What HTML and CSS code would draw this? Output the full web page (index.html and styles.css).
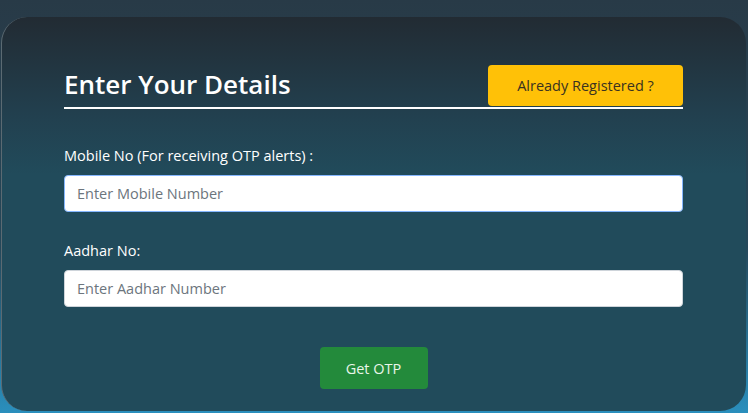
FILE: index.html
```html
<!DOCTYPE html>
<html lang="en">
  <head>
    <meta charset="UTF-8" />
    <meta name="viewport" content="width=device-width, initial-scale=1.0" />
    <title>Register</title>
    <link rel="stylesheet" href="styles.css">
  </head>
  <body>
    <div class="card">
      <div class="head">
        <h2 class="title">Enter Your Details</h2>
        <button class="btn btn-warn">Already Registered ?</button>
      </div>

      <div class="field">
        <label for="mobile">Mobile No (For receiving OTP alerts) :</label>
        <input id="mobile" class="input input-focus" placeholder="Enter Mobile Number" />
      </div>

      <div class="field">
        <label for="aadhar">Aadhar No:</label>
        <input id="aadhar" class="input" placeholder="Enter Aadhar Number" />
      </div>

      <div class="actions">
        <button class="btn btn-go">Get OTP</button>
      </div>
    </div>
  </body>
</html>
```

FILE: styles.css
```css
* {
  box-sizing: border-box;
}

html,
body {
  height: 100%;
}

body {
  margin: 0;
  padding: 17px 2px 2px 1px;
  font-family: "Open Sans", sans-serif;
  background: linear-gradient(180deg, #283a47 0%, #25485a 60%, #2a8fbd 100%);
  overflow: hidden;
}

.card {
  height: 394px;
  padding: 48px 63px 0 62px;
  border-radius: 26px;
  border-left: 1px solid #5b6a72;
  background: linear-gradient(180deg, #222b33 0%, #22404f 25%, #214b5b 40%, #214b5b 100%);
}

.head {
  display: flex;
  justify-content: space-between;
  align-items: flex-end;
  border-bottom: 2px solid #fff;
}

.title {
  margin: 0 0 5px;
  color: #fff;
  font-size: 26px;
  font-weight: 600;
}

.btn {
  border: none;
  border-radius: 4px;
  font-family: inherit;
  font-size: 14.5px;
  cursor: pointer;
}

.btn-warn {
  width: 195px;
  height: 41px;
  margin-bottom: 1px;
  background: #ffc107;
  color: #3a3220;
}

.field {
  display: flex;
  flex-direction: column;
  margin-top: 36px;
}

.field + .field {
  margin-top: 28px;
}

.field label {
  color: #fff;
  font-size: 14.5px;
  line-height: 22px;
  margin-bottom: 8px;
}

.input {
  height: 37px;
  padding: 0 12px;
  border: 1px solid #ced4da;
  border-radius: 4px;
  background: #fff;
  font-family: inherit;
  font-size: 14.5px;
  color: #333;
  outline: none;
}

.input-focus {
  border-color: #86b7fe;
}

.input::placeholder {
  color: #6c757d;
}

.actions {
  display: flex;
  justify-content: center;
  margin-top: 40px;
}

.btn-go {
  width: 108px;
  height: 42px;
  background: #238a3b;
  color: #e9f6e9;
}
```
